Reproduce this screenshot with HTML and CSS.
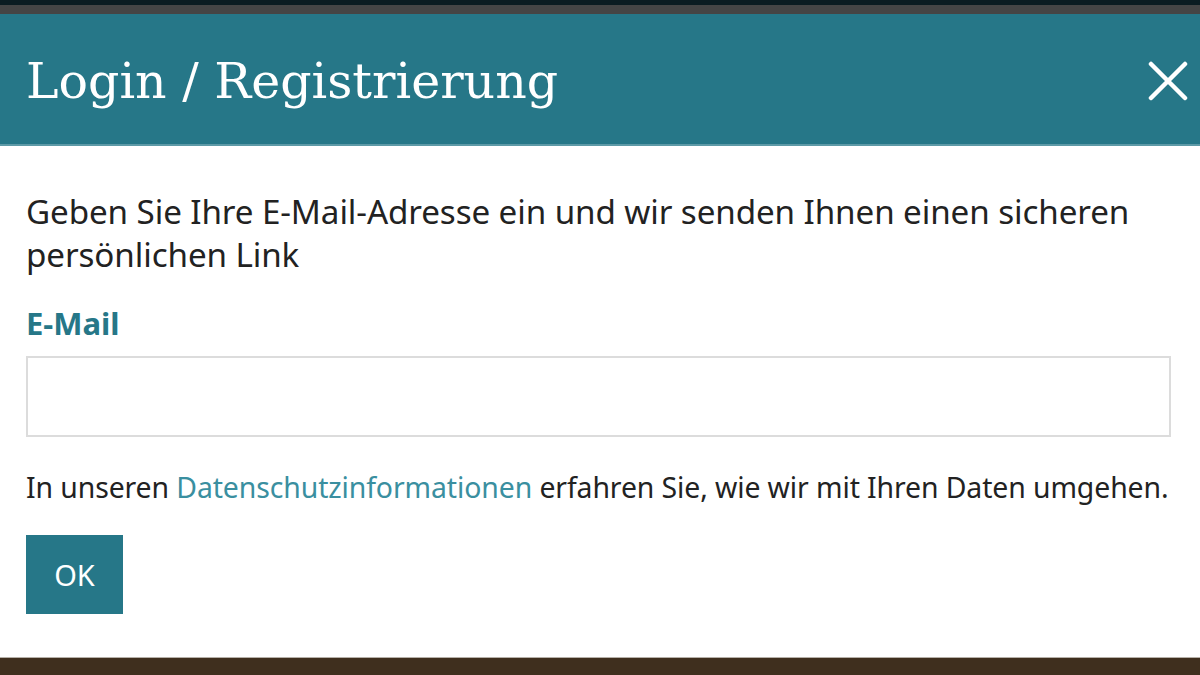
FILE: index.html
```html
<!DOCTYPE html>
<html lang="de">
<head>
    <meta charset="UTF-8">
    <meta name="viewport" content="width=device-width, initial-scale=1.0">
    <title>Login / Registrierung</title>
    <link rel="stylesheet" href="styles.css">
</head>
<body>
    <div class="backdrop-top"></div>

    <div class="modal">
        <div class="modal-header">
            <h1 class="modal-title">Login / Registrierung</h1>
            <button class="close" aria-label="Schließen">
                <svg width="40" height="40" viewBox="0 0 40 40">
                    <path d="M3 3 L37 37 M37 3 L3 37" stroke="#fff" stroke-width="4.5" stroke-linecap="round" fill="none"/>
                </svg>
            </button>
        </div>

        <div class="modal-body">
            <p class="intro">Geben Sie Ihre E-Mail-Adresse ein und wir senden Ihnen einen sicheren persönlichen Link</p>
            <label class="field-label" for="email">E-Mail</label>
            <input class="field-input" id="email" type="email">
            <p class="privacy">In unseren <a href="#">Datenschutzinformationen</a> erfahren Sie, wie wir mit Ihren Daten umgehen.</p>
            <button class="btn-ok">OK</button>
        </div>
    </div>

    <div class="backdrop-bottom"></div>
</body>
</html>
```

FILE: styles.css
```css
* {
    box-sizing: border-box;
}
body {
    margin: 0;
    height: 675px;
    overflow: hidden;
    background: #3f2f1e;
    font-family: "Noto Sans", Arial, sans-serif;
}
.backdrop-top {
    height: 14px;
    background: #454545;
    border-top: 5px solid #0b1c21;
}
.modal {
    background: #fff;
}
.modal-header {
    display: flex;
    align-items: center;
    justify-content: space-between;
    height: 132px;
    padding: 4px 12px 0 26px;
    background: #267788;
    border-bottom: 2px solid #5d9aa7;
}
.modal-title {
    margin: 0;
    color: #fff;
    font-family: "DejaVu Serif", serif;
    font-weight: normal;
    font-size: 49px;
}
.close {
    padding: 0;
    border: none;
    background: none;
    cursor: pointer;
    display: flex;
}
.modal-body {
    display: flex;
    flex-direction: column;
    align-items: flex-start;
    height: 511px;
    padding: 44px 29px 0 26px;
}
.intro {
    margin: 0;
    color: #222;
    font-size: 33.2px;
    line-height: 43px;
    letter-spacing: -0.1px;
}
.field-label {
    margin-top: 27px;
    color: #267788;
    font-weight: bold;
    font-size: 31px;
    line-height: 40px;
}
.field-input {
    width: 100%;
    height: 81px;
    margin-top: 13px;
    border: 2px solid #dcdcdc;
    background: #fff;
}
.privacy {
    margin: 33px 0 0;
    color: #222;
    font-size: 28.4px;
    line-height: 34px;
    letter-spacing: -0.1px;
}
.privacy a {
    color: #3a8fa0;
    text-decoration: none;
}
.btn-ok {
    margin-top: 31px;
    width: 97px;
    height: 79px;
    border: none;
    background: #267788;
    color: #fff;
    font-family: "Noto Sans", Arial, sans-serif;
    font-size: 29px;
    cursor: pointer;
}
.backdrop-bottom {
    height: 18px;
    border-top: 1px solid #b6b0a8;
    background: #3f2f1e;
}
```
